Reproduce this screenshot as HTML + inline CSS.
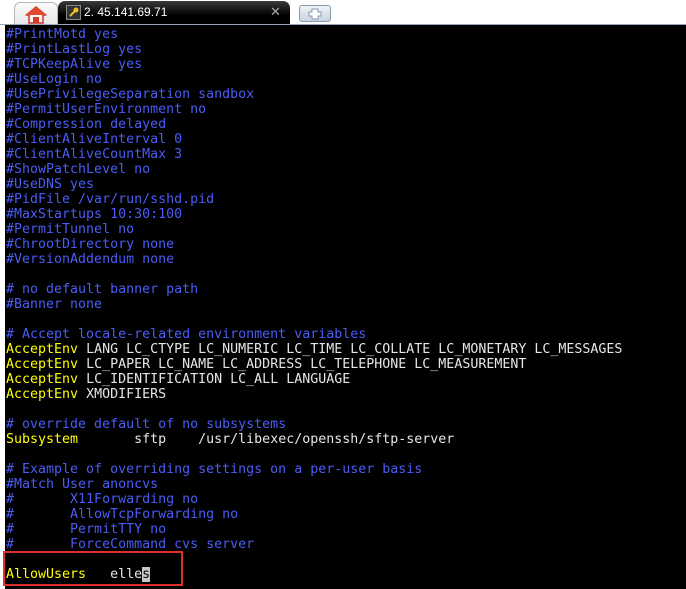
<!DOCTYPE html>
<html><head><meta charset="utf-8"><style>
html,body{margin:0;padding:0;width:686px;height:589px;overflow:hidden;background:#fff;}
.tabbar{position:absolute;left:0;top:0;width:686px;height:25px;background:#fff;}
.line{position:absolute;left:0;top:24px;width:686px;height:1px;background:#9aa6b8;}
.home{position:absolute;left:14px;top:2px;width:42px;height:23px;background:linear-gradient(#fbfbfb,#e6e6e6);border:1px solid #bbb;border-bottom:none;border-radius:6px 6px 0 0;}
.tab{position:absolute;left:58px;top:1px;width:232px;height:24px;background:linear-gradient(#3a3a3a,#000 60%);border-radius:7px 7px 0 0;}
.tab .t{position:absolute;left:26px;top:4px;color:#fff;font:12px "Liberation Sans",sans-serif;}
.tab .x{position:absolute;left:212px;top:3px;color:#aaa;font:13px "Liberation Sans",sans-serif;}
.key{position:absolute;left:8px;top:4px;width:13px;height:13px;background:#333;border:1px solid #888;}
.plus{position:absolute;left:299px;top:5px;width:30px;height:15px;background:linear-gradient(#eef2f7,#c9d3df);border:1px solid #8a9ab0;border-radius:3px;}
.term{position:absolute;left:5px;top:25px;width:681px;height:564px;background:#000;}
pre{margin:0;position:absolute;left:1px;top:2px;font:13.3px/15px "DejaVu Sans Mono","Liberation Mono",monospace;color:#e6e6e6;}
.b{color:#4b5cf5}.y{color:#ffff00}
.cur{background:#c8c8c8;color:#000}
.box{position:absolute;left:3px;top:551px;width:176px;height:31px;border:2px solid #e0302e;}
</style></head><body>
<div class="tabbar">
<div class="home"><svg width="42" height="22"><polygon points="21,4 12,12 14,12 14,20 28,20 28,12 30,12" fill="#f2f2f2" stroke="#c33" stroke-width="1.5"/><rect x="18" y="14" width="6" height="6" fill="#d03a2a"/><polygon points="21,3 10,12 32,12" fill="#e04a30"/></svg></div>
<div class="tab"><div class="key"><svg width="13" height="13"><path d="M3 10 L8 5" stroke="#f0c020" stroke-width="2"/><circle cx="9" cy="4" r="2.5" fill="#f0c020"/></svg></div><span class="t">2. 45.141.69.71</span><span class="x">✕</span></div>
<div class="plus"><svg width="30" height="15"><path d="M12 3h6v3h3v4h-3v3h-6v-3h-3v-4h3z" fill="#fff" stroke="#8a9ab0"/></svg></div>
<div class="line"></div>
</div>
<div class="term"><pre><span class="b">#PrintMotd yes
#PrintLastLog yes
#TCPKeepAlive yes
#UseLogin no
#UsePrivilegeSeparation sandbox
#PermitUserEnvironment no
#Compression delayed
#ClientAliveInterval 0
#ClientAliveCountMax 3
#ShowPatchLevel no
#UseDNS yes
#PidFile /var/run/sshd.pid
#MaxStartups 10:30:100
#PermitTunnel no
#ChrootDirectory none
#VersionAddendum none

# no default banner path
#Banner none

# Accept locale-related environment variables</span>
<span class="y">AcceptEnv</span> LANG LC_CTYPE LC_NUMERIC LC_TIME LC_COLLATE LC_MONETARY LC_MESSAGES
<span class="y">AcceptEnv</span> LC_PAPER LC_NAME LC_ADDRESS LC_TELEPHONE LC_MEASUREMENT
<span class="y">AcceptEnv</span> LC_IDENTIFICATION LC_ALL LANGUAGE
<span class="y">AcceptEnv</span> XMODIFIERS

<span class="b"># override default of no subsystems</span>
<span class="y">Subsystem</span>       sftp    /usr/libexec/openssh/sftp-server

<span class="b"># Example of overriding settings on a per-user basis
#Match User anoncvs
#       X11Forwarding no
#       AllowTcpForwarding no
#       PermitTTY no
#       ForceCommand cvs server</span>

<span class="y">AllowUsers</span>   elle<span class="cur">s</span></pre></div>
<div class="box"></div>
</body></html>
